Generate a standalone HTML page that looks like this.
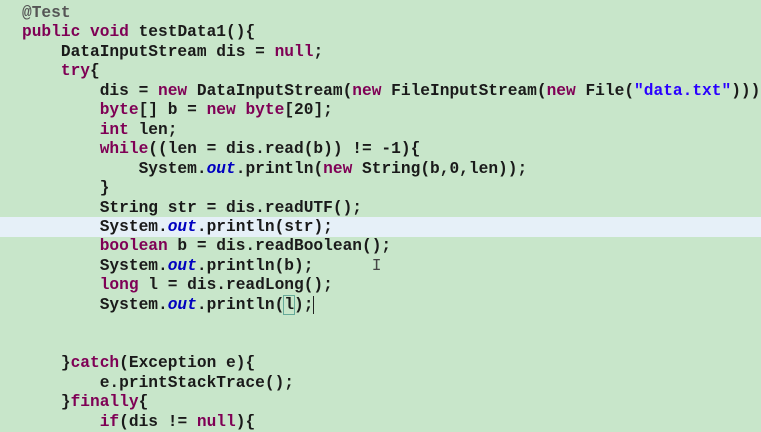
<!DOCTYPE html>
<html><head><meta charset="utf-8"><style>
html,body{margin:0;padding:0;}
body{width:761px;height:427px;overflow:hidden;background:#c8e6ca;position:relative;}
.hl{position:absolute;left:0;top:217px;width:761px;height:20px;background:#e6f0f8;}
pre{position:absolute;left:22px;top:4px;margin:0;font-family:"Liberation Mono",monospace;font-size:16.2px;line-height:19.45px;color:#1a1a1a;font-weight:bold;letter-spacing:0;}
.k{color:#7f0055;}
.s{color:#2a00ff;}
.o{color:#0000c0;font-style:italic;}
.a{color:#555;}
.cur{outline:1px solid #6a9;}
.c{border-right:1.5px solid #222;}
</style></head><body>
<div class="hl"></div>
<pre><span class="a">@Test</span>
<span class="k">public</span> <span class="k">void</span> testData1(){
    DataInputStream dis = <span class="k">null</span>;
    <span class="k">try</span>{
        dis = <span class="k">new</span> DataInputStream(<span class="k">new</span> FileInputStream(<span class="k">new</span> File(<span class="s">"data.txt"</span>)));
        <span class="k">byte</span>[] b = <span class="k">new</span> <span class="k">byte</span>[20];
        <span class="k">int</span> len;
        <span class="k">while</span>((len = dis.read(b)) != -1){
            System.<span class="o">out</span>.println(<span class="k">new</span> String(b,0,len));
        }
        String str = dis.readUTF();
        System.<span class="o">out</span>.println(str);
        <span class="k">boolean</span> b = dis.readBoolean();
        System.<span class="o">out</span>.println(b);      <span style="font-weight:normal;color:#444">I</span>
        <span class="k">long</span> l = dis.readLong();
        System.<span class="o">out</span>.println(<span class="cur">l</span>)<span class="c">;</span>


    }<span class="k">catch</span>(Exception e){
        e.printStackTrace();
    }<span class="k">finally</span>{
        <span class="k">if</span>(dis != <span class="k">null</span>){
</pre>
</body></html>
